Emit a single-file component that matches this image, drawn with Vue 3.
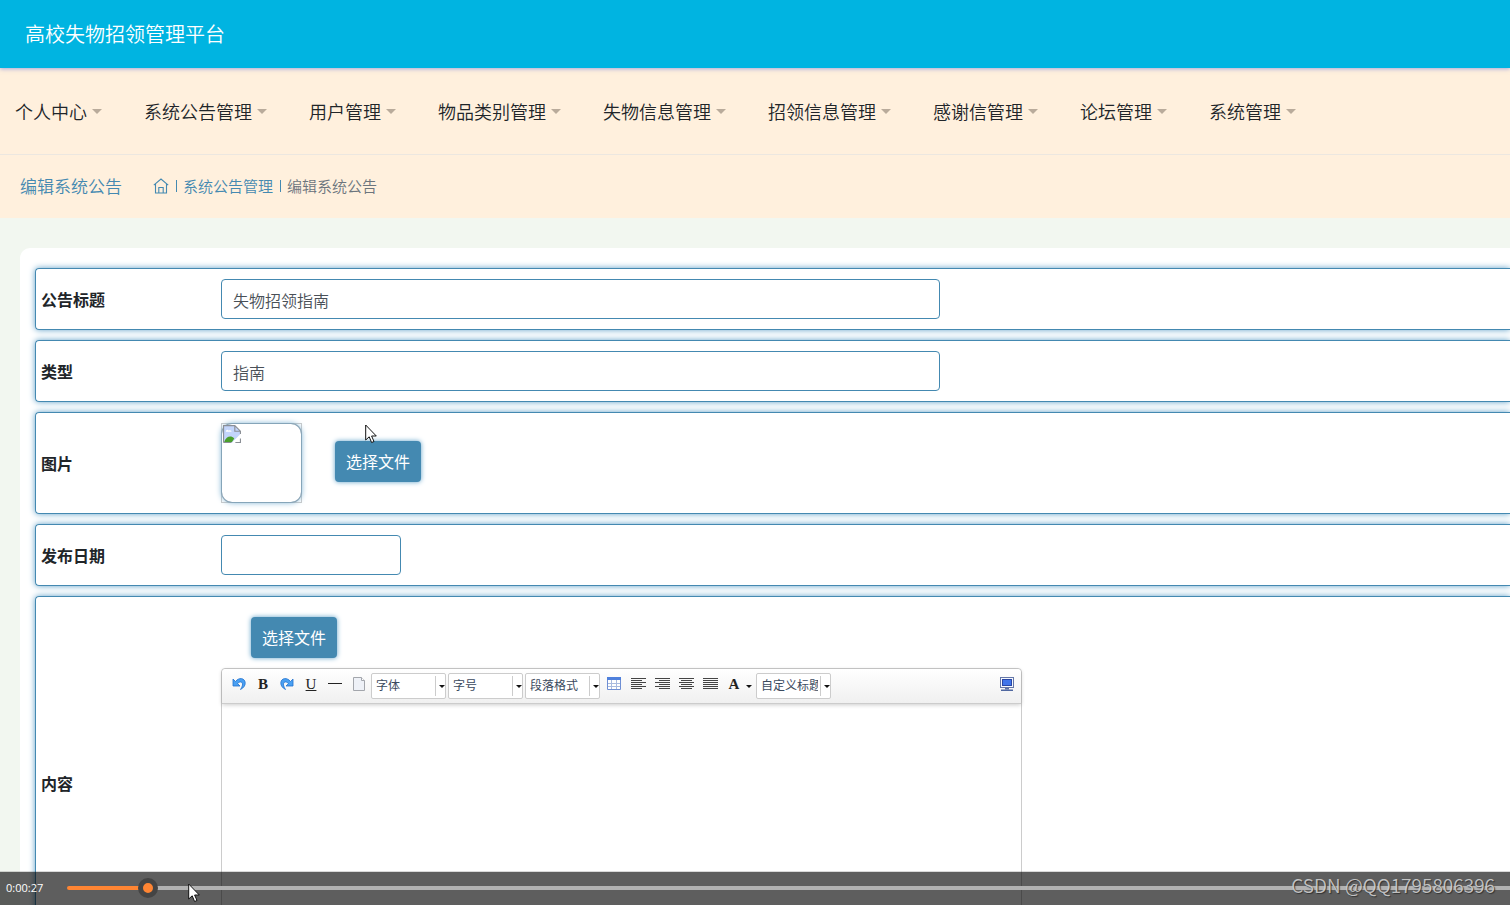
<script setup>
import { ref, computed } from 'vue'

const menus = ['个人中心', '系统公告管理', '用户管理', '物品类别管理', '失物信息管理', '招领信息管理', '感谢信管理', '论坛管理', '系统管理']
const title = ref('失物招领指南')
const kind = ref('指南')
const date = ref('')
const content = ref('')
const combos = ['字体', '字号', '段落格式']
const aligns = [
  { name: '左对齐', lines: [[0, 15], [0, 11], [0, 15], [0, 11], [0, 15], [0, 11]] },
  { name: '右对齐', lines: [[0, 15], [4, 11], [0, 15], [4, 11], [0, 15], [4, 11]] },
  { name: '居中对齐', lines: [[0, 15], [2, 11], [0, 15], [2, 11], [0, 15], [2, 11]] },
  { name: '两端对齐', lines: [[0, 15], [0, 15], [0, 15], [0, 15], [0, 15], [0, 15]] }
]
const duration = 540
const seconds = ref(27)
const progress = computed(() => seconds.value / duration)
const clock = computed(() => {
  const s = Number(seconds.value)
  const pad = (n) => String(n).padStart(2, '0')
  return `${Math.floor(s / 3600)}:${pad(Math.floor(s / 60) % 60)}:${pad(s % 60)}`
})
</script>

<template>
  <div class="page">
    <header class="topbar"><h1>高校失物招领管理平台</h1></header>

    <nav class="menu">
      <a v-for="m in menus" :key="m" href="#">{{ m }}<span class="caret"></span></a>
    </nav>

    <div class="crumbs">
      <h2>编辑系统公告</h2>
      <ol>
        <li>
          <a href="#" aria-label="首页">
            <svg width="16" height="16" viewBox="0 0 16 16" fill="none" stroke="currentColor" stroke-width="1.1">
              <path d="M.8 7.200 8 1l7.200 6.200M2.500 5.900V15h11V5.900M5.800 15V9.500h4.400V15" />
            </svg>
          </a>
        </li>
        <li><a href="#">系统公告管理</a></li>
        <li>编辑系统公告</li>
      </ol>
    </div>

    <main class="panel">
      <form @submit.prevent>
        <div class="row">
          <label class="name" for="title">公告标题</label>
          <input id="title" v-model="title" class="text wide" type="text">
        </div>
        <div class="row">
          <label class="name" for="kind">类型</label>
          <input id="kind" v-model="kind" class="text wide" type="text">
        </div>
        <div class="row">
          <span class="name">图片</span>
          <div class="picture">
            <div class="preview">
              <div class="frame">
                <svg width="18" height="18" viewBox="0 0 16 16">
                  <path d="M.5 15.500V.5h10l5 5V9l-7 6.500z" fill="#c3d5fb" />
                  <path d="M2.500 6c0-2 2-2.500 2.500-1 1.500-1 3 0 2.500 1z" fill="#fff" />
                  <path d="M1 15c2-5 6-6 9-3l-2 3z" fill="#4aa02c" />
                  <path d="M16 7.500 8 15.500h3l5-4.500z" fill="#fff" />
                  <path d="M.5 15.500V.5h10l5 5V8M10.500.5v5h5M.5 15.500h7M11 15.500h4.500V12" fill="none" stroke="#8b8f96" />
                </svg>
              </div>
            </div>
            <button type="button" class="upload">选择文件</button>
          </div>
        </div>
        <div class="row">
          <label class="name" for="date">发布日期</label>
          <input id="date" v-model="date" class="text short" type="text">
        </div>
        <div class="row">
          <label class="name" for="content">内容</label>
          <div class="content">
            <button type="button" class="upload">选择文件</button>
            <div class="editor">
              <div class="toolbar">
                <button type="button" class="tool" aria-label="撤销">
                  <svg width="14" height="14" viewBox="0 0 14 14">
                    <path d="M1 2v7h7L5.600 6.600C8 3.600 11 5 10.500 8c-.2 1.500-1 3-2 4.500 3-1.500 5-4 4.700-7C12.600 1 7 0 3.500 4.500z" fill="#4aa0f2" stroke="#2272cf" stroke-width=".8" />
                  </svg>
                </button>
                <button type="button" class="tool serif"><b>B</b></button>
                <button type="button" class="tool" aria-label="重做">
                  <svg width="14" height="14" viewBox="0 0 14 14">
                    <path d="M13 2v7H6l2.400-2.400C6 3.600 3 5 3.500 8c.2 1.500 1 3 2 4.500-3-1.500-5-4-4.700-7C1.400 1 7 0 10.500 4.500z" fill="#4aa0f2" stroke="#2272cf" stroke-width=".8" />
                  </svg>
                </button>
                <button type="button" class="tool serif"><u>U</u></button>
                <button type="button" class="tool" aria-label="分隔线">
                  <svg width="14" height="14" viewBox="0 0 14 14"><path d="M0 6.500h14" stroke="#222" /></svg>
                </button>
                <button type="button" class="tool" aria-label="清空文档">
                  <svg width="14" height="14" viewBox="0 0 14 14">
                    <path d="M1.500.5h8l3 3v10h-11z" fill="#eef1f7" stroke="#a3a6ac" />
                    <path d="M9.500.5v3h3" fill="#fff" stroke="#a3a6ac" />
                  </svg>
                </button>
                <span v-for="c in combos" :key="c" class="combo">
                  <select :aria-label="c"><option>{{ c }}</option></select>
                  <span class="drop"><i class="arrow"></i></span>
                </span>
                <button type="button" class="tool" aria-label="插入表格">
                  <svg width="14" height="14" viewBox="0 0 14 14">
                    <path d="M.5.5h13v12H.5z" fill="#fff" stroke="#6f8fd4" />
                    <path d="M0 0h14v3H0z" fill="#4f80dc" />
                    <path d="M1 6.500h12M1 9.500h12M4.500 3v9M9.500 3v9" stroke="#a9bbdf" />
                  </svg>
                </button>
                <button v-for="a in aligns" :key="a.name" type="button" class="tool" :aria-label="a.name">
                  <svg width="15" height="14" viewBox="0 0 15 14" fill="#444">
                    <rect v-for="(l, i) in a.lines" :key="i" :x="l[0]" :y="1 + i * 2" :width="l[1]" height="1" />
                  </svg>
                </button>
                <button type="button" class="tool serif"><b>A</b></button>
                <i class="arrow"></i>
                <span class="combo last">
                  <select aria-label="自定义标题"><option>自定义标题</option></select>
                  <span class="drop"><i class="arrow"></i></span>
                </span>
                <button type="button" class="tool full" aria-label="全屏">
                  <svg width="14" height="14" viewBox="0 0 14 14">
                    <rect x=".5" y=".5" width="13" height="10" fill="#f4f7fd" stroke="#6577a8" />
                    <rect x="2.500" y="2.500" width="9" height="6" fill="#3f74ea" stroke="#2846a5" />
                    <path d="M5 11h4v1.500H5z" fill="#5b6fa5" /><path d="M1 12.500h12V14H1z" fill="#5068a0" />
                  </svg>
                </button>
              </div>
              <textarea id="content" v-model="content"></textarea>
            </div>
          </div>
        </div>
      </form>
    </main>

    <footer class="player">
      <label for="seek">{{ clock }}</label>
      <input id="seek" v-model="seconds" type="range" min="0" :max="duration" :style="{ '--progress': progress }">
      <span class="mark">CSDN @QQ1795806396</span>
    </footer>

    <svg class="pointer first" width="12" height="20" viewBox="0 0 12 20">
      <path d="M.7 1v15l3.500-3.200 2.400 5.700 2.400-1-2.400-5.500h4.700z" fill="#fff" stroke="#111" />
    </svg>
    <svg class="pointer second" width="12" height="20" viewBox="0 0 12 20">
      <path d="M.7 1v15l3.500-3.200 2.400 5.700 2.400-1-2.400-5.500h4.700z" fill="#fff" stroke="#111" />
    </svg>
  </div>
</template>

<style>
body {
  margin: 0;
}
</style>

<style scoped>
* {
  box-sizing: border-box;
}
.page {
  position: relative;
  height: 100vh;
  overflow: hidden;
  background: #f2f7f0;
  color: #212529;
  font-family: "Noto Sans CJK SC", sans-serif;
  font-size: 16px;
  line-height: 24px;
}
a {
  color: inherit;
  text-decoration: none;
}
button, input, select, textarea {
  font-family: inherit;
}
.topbar {
  position: relative;
  display: flex;
  align-items: center;
  height: 68px;
  padding: 0 25px;
  background: #00b4e1;
  box-shadow: 0 1px 4px rgba(80, 100, 220, 0.5);
}
h1, h2 {
  margin: 0;
  font-weight: 350;
}
h1 {
  color: #fff;
  font-size: 20px;
}
.menu {
  display: flex;
  align-items: center;
  gap: 42px;
  height: 87px;
  padding: 0 15px;
  border-bottom: 1px solid #ece7e0;
  background: #fff0dd;
  box-shadow: 0 1px 2px rgba(0, 0, 0, 0.05);
  font-size: 18px;
  font-weight: 350;
  white-space: nowrap;
}
.menu a {
  display: flex;
  align-items: center;
  gap: 5px;
}
.caret {
  border: 5px solid transparent;
  border-top-color: #b9ab9b;
  border-bottom: 0;
}
.crumbs {
  display: flex;
  align-items: center;
  gap: 31px;
  height: 63px;
  padding: 0 20px 2px;
  background: #fff0dd;
  background-clip: padding-box;
  color: #6c757d;
  font-size: 15px;
  font-weight: 350;
}
h2 {
  color: #4489b1;
  font-size: 17px;
}
ol {
  display: flex;
  align-items: center;
  margin: 0;
  padding: 0;
  list-style: none;
}
li {
  display: flex;
  align-items: center;
}
li + li::before {
  content: "";
  width: 1px;
  height: 12px;
  margin: 0 6px 0 7px;
  background: #4489b1;
}
li a {
  display: flex;
  color: #4489b1;
}
.panel {
  margin: 30px 0 0 20px;
  padding: 20px 0 20px 15px;
  border-radius: 10px 0 0 0;
  background: #fff;
}
form {
  display: flex;
  flex-direction: column;
  gap: 10px;
}
.row {
  display: flex;
  align-items: center;
  padding: 10px 5px;
  border: 1px solid #4489b1;
  border-right: 0;
  border-radius: 4px 0 0 4px;
  box-shadow: 0 0 6px #5fa0c8;
}
.name {
  flex: none;
  width: 180px;
  font-weight: 700;
}
.text {
  height: 40px;
  padding: 2px 11px 0;
  border: 1px solid #4489b1;
  border-radius: 4px;
  background: #fff;
  color: #495057;
  font-size: 16px;
  font-weight: 350;
}
.wide {
  flex: 0 1 719px;
}
.short {
  width: 180px;
}
.picture {
  display: flex;
  align-items: flex-start;
}
.preview {
  width: 81px;
  border: 1px solid #ccc;
}
.frame {
  height: 78px;
  padding: 1px;
  border-radius: 10px;
  box-shadow: 0 0 6px #5fa0c8, 0 0 0 1px #a5a9ae;
}
.frame svg {
  display: block;
}
.upload {
  height: 41px;
  padding: 0 11px 2px;
  border: 0;
  border-radius: 4px;
  background: #4489b1;
  box-shadow: 0 0 5px #5fa0c8;
  color: #fff;
  font-size: 16px;
}
.picture .upload {
  margin: 18px 33px 0;
}
.content .upload {
  margin: 10px 30px;
}
.content {
  flex: 0 1 801px;
}
.editor {
  border: 1px solid #ccc;
  border-radius: 4px;
}
.toolbar {
  position: relative;
  display: flex;
  align-items: center;
  height: 35px;
  padding: 0 2px 0 5px;
  border-bottom: 1px solid #ccc;
  border-radius: 4px 4px 0 0;
  background: linear-gradient(#fff, #f0f0f0);
  box-shadow: 0 1px 4px rgba(0, 0, 0, 0.2);
}
.tool {
  display: flex;
  flex: none;
  align-items: center;
  justify-content: center;
  width: 24px;
  height: 24px;
  padding: 0 0 4px;
  border: 0;
  background: none;
  color: #222;
}
.serif {
  font-family: "Liberation Serif", serif;
  font-size: 15px;
}
.combo {
  display: flex;
  flex: none;
  width: 75px;
  height: 26px;
  margin-right: 2px;
  border: 1px solid #ccc;
  border-radius: 2px;
  background: #fff;
}
.combo.last {
  margin-left: 4px;
}
.combo select {
  width: 57px;
  margin-left: 4px;
  padding: 0 0 3px;
  border: 0;
  appearance: none;
  background: none;
  color: #3b4a5e;
  font-size: 12px;
}
.drop {
  display: flex;
  flex: none;
  align-items: center;
  justify-content: flex-end;
  width: 10px;
  height: 20px;
  margin: 2px 0 0 2px;
  border-left: 1px solid #ccc;
}
.arrow {
  border: 3px solid transparent;
  border-top-color: #111;
  border-bottom: 0;
}
.full {
  margin-left: auto;
}
textarea {
  display: block;
  width: 100%;
  height: 254px;
  border: 0;
  background: none;
  resize: none;
}
.player {
  position: absolute;
  right: 0;
  bottom: 0;
  left: 0;
  display: flex;
  align-items: center;
  height: 34px;
  padding: 0 0 2px 6px;
  border-top: 1px solid rgba(0, 0, 0, 0.15);
  background: rgba(0, 0, 0, 0.63);
  background-clip: padding-box;
  color: #fff;
}
.player label {
  flex: none;
  width: 61px;
  font-family: "Open Sans", sans-serif;
  font-size: 11px;
}
.player input {
  flex: 1;
  height: 20px;
  margin: 0;
  appearance: none;
  background: none;
}
.player input::-webkit-slider-runnable-track {
  height: 4px;
  border-radius: 2px 0 0 2px;
  background: linear-gradient(#ff8533, #ff8533) 0 0 / calc(10px + (100% - 20px) * var(--progress)) 100% no-repeat #b2b2b2;
}
.player input::-webkit-slider-thumb {
  width: 20px;
  height: 20px;
  margin-top: -8px;
  border: 5px solid #444;
  border-radius: 50%;
  appearance: none;
  background: #ff8533;
}
.mark {
  position: absolute;
  right: 15px;
  bottom: 8px;
  color: rgba(215, 215, 215, 0.85);
  font-size: 19px;
  font-weight: 350;
  text-shadow: 1px 1px 1px #333;
}
.pointer {
  position: absolute;
}
.first {
  top: 424px;
  left: 365px;
}
.second {
  top: 883px;
  left: 188px;
}
</style>
